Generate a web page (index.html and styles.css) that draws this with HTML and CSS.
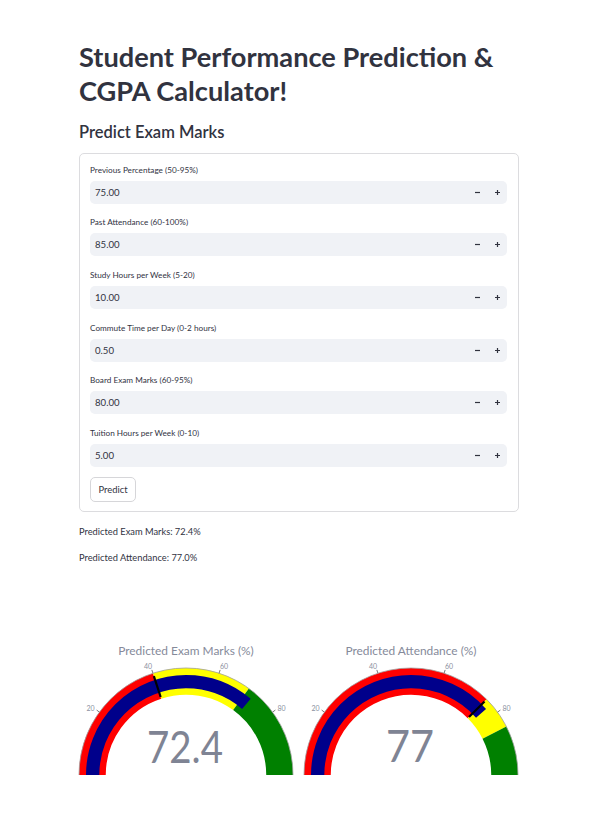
FILE: index.html
```html
<!DOCTYPE html>
<html lang="en">
<head>
<meta charset="utf-8">
<title>Student Performance Prediction &amp; CGPA Calculator</title>
<link rel="stylesheet" href="styles.css">
</head>
<body>
<main class="page">
  <h1 class="title">Student Performance Prediction &amp; CGPA Calculator!</h1>
  <h3 class="subheader">Predict Exam Marks</h3>

  <div class="form">
    <div class="field">
      <label class="field-label">Previous Percentage (50-95%)</label>
      <div class="number-input">
        <span class="value">75.00</span>
        <span class="step"><svg width="7" height="7" viewBox="0 0 7 7"><path d="M1 3.5H6" class="icon"/></svg></span>
        <span class="step"><svg width="7" height="7" viewBox="0 0 7 7"><path d="M1 3.5H6M3.5 1V6" class="icon"/></svg></span>
      </div>
    </div>
    <div class="field">
      <label class="field-label">Past Attendance (60-100%)</label>
      <div class="number-input">
        <span class="value">85.00</span>
        <span class="step"><svg width="7" height="7" viewBox="0 0 7 7"><path d="M1 3.5H6" class="icon"/></svg></span>
        <span class="step"><svg width="7" height="7" viewBox="0 0 7 7"><path d="M1 3.5H6M3.5 1V6" class="icon"/></svg></span>
      </div>
    </div>
    <div class="field">
      <label class="field-label">Study Hours per Week (5-20)</label>
      <div class="number-input">
        <span class="value">10.00</span>
        <span class="step"><svg width="7" height="7" viewBox="0 0 7 7"><path d="M1 3.5H6" class="icon"/></svg></span>
        <span class="step"><svg width="7" height="7" viewBox="0 0 7 7"><path d="M1 3.5H6M3.5 1V6" class="icon"/></svg></span>
      </div>
    </div>
    <div class="field">
      <label class="field-label">Commute Time per Day (0-2 hours)</label>
      <div class="number-input">
        <span class="value">0.50</span>
        <span class="step"><svg width="7" height="7" viewBox="0 0 7 7"><path d="M1 3.5H6" class="icon"/></svg></span>
        <span class="step"><svg width="7" height="7" viewBox="0 0 7 7"><path d="M1 3.5H6M3.5 1V6" class="icon"/></svg></span>
      </div>
    </div>
    <div class="field">
      <label class="field-label">Board Exam Marks (60-95%)</label>
      <div class="number-input">
        <span class="value">80.00</span>
        <span class="step"><svg width="7" height="7" viewBox="0 0 7 7"><path d="M1 3.5H6" class="icon"/></svg></span>
        <span class="step"><svg width="7" height="7" viewBox="0 0 7 7"><path d="M1 3.5H6M3.5 1V6" class="icon"/></svg></span>
      </div>
    </div>
    <div class="field">
      <label class="field-label">Tuition Hours per Week (0-10)</label>
      <div class="number-input">
        <span class="value">5.00</span>
        <span class="step"><svg width="7" height="7" viewBox="0 0 7 7"><path d="M1 3.5H6" class="icon"/></svg></span>
        <span class="step"><svg width="7" height="7" viewBox="0 0 7 7"><path d="M1 3.5H6M3.5 1V6" class="icon"/></svg></span>
      </div>
    </div>
    <button class="btn" type="button">Predict</button>
  </div>

  <div class="results">
    <p class="result">Predicted Exam Marks: 72.4%</p>
    <p class="result">Predicted Attendance: 77.0%</p>
  </div>

  <svg class="chart" width="440" height="190" viewBox="0 0 440 190">
    <!-- Left gauge -->
    <text class="g-title" x="107" y="64" text-anchor="middle">Predicted Exam Marks (%)</text>
    <g transform="rotate(180 107 184)">
      <circle cx="107" cy="184" r="93.625" pathLength="200" class="band red" stroke-dasharray="40 400"/>
      <circle cx="107" cy="184" r="93.625" pathLength="200" class="band yellow" stroke-dasharray="0 40 30 400"/>
      <circle cx="107" cy="184" r="93.625" pathLength="200" class="band green" stroke-dasharray="0 70 30 400"/>
      <circle cx="107" cy="184" r="107" pathLength="200" class="edge" stroke-dasharray="100 400"/>
      <circle cx="107" cy="184" r="93.35" pathLength="200" class="bar" stroke-dasharray="72.4 400"/>
    </g>
    <line x1="81.66" y1="106.01" x2="74.86" y2="85.09" class="threshold"/>
    <g class="ticks">
      <line x1="20.43" y1="121.11" x2="17.60" y2="119.05"/>
      <line x1="73.93" y1="82.24" x2="72.85" y2="78.91"/>
      <line x1="140.07" y1="82.24" x2="141.15" y2="78.91"/>
      <line x1="193.57" y1="121.11" x2="196.40" y2="119.05"/>
    </g>
    <g class="tick-labels" text-anchor="middle">
      <text x="11.5" y="119.5">20</text>
      <text x="69" y="77.8">40</text>
      <text x="145" y="77.8">60</text>
      <text x="202.5" y="119.5">80</text>
    </g>
    <text class="g-number" x="106" y="171.5" text-anchor="middle" textLength="76" lengthAdjust="spacingAndGlyphs">72.4</text>

    <!-- Right gauge -->
    <text class="g-title" x="332" y="64" text-anchor="middle">Predicted Attendance (%)</text>
    <g transform="rotate(180 332 184)">
      <circle cx="332" cy="184" r="93.625" pathLength="200" class="band red" stroke-dasharray="75 400"/>
      <circle cx="332" cy="184" r="93.625" pathLength="200" class="band yellow" stroke-dasharray="0 75 10 400"/>
      <circle cx="332" cy="184" r="93.625" pathLength="200" class="band green" stroke-dasharray="0 85 15 400"/>
      <circle cx="332" cy="184" r="107" pathLength="200" class="edge" stroke-dasharray="100 400"/>
      <circle cx="332" cy="184" r="93.35" pathLength="200" class="bar" stroke-dasharray="77 400"/>
    </g>
    <line x1="389.98" y1="126.02" x2="405.54" y2="110.46" class="threshold"/>
    <g class="ticks">
      <line x1="245.43" y1="121.11" x2="242.60" y2="119.05"/>
      <line x1="298.93" y1="82.24" x2="297.85" y2="78.91"/>
      <line x1="365.07" y1="82.24" x2="366.15" y2="78.91"/>
      <line x1="418.57" y1="121.11" x2="421.40" y2="119.05"/>
    </g>
    <g class="tick-labels" text-anchor="middle">
      <text x="236.5" y="119.5">20</text>
      <text x="294" y="77.8">40</text>
      <text x="370" y="77.8">60</text>
      <text x="427.5" y="119.5">80</text>
    </g>
    <text class="g-number" x="331" y="171" text-anchor="middle" textLength="48" lengthAdjust="spacingAndGlyphs">77</text>
  </svg>
</main>
</body>
</html>
```

FILE: styles.css
```css
* { box-sizing: border-box; }

html, body {
  margin: 0;
  padding: 0;
  background: #ffffff;
}

body {
  font-family: Lato, "Open Sans", sans-serif;
  color: #31333f;
}

.page {
  width: 519px;
  padding: 39.5px 0 0 79px;
}

.title {
  margin: 0;
  font-size: 27.2px;
  line-height: 34px;
  font-weight: 700;
  color: #31333f;
}

.subheader {
  margin: 14.4px 0 0;
  font-size: 16.5px;
  line-height: 20px;
  font-weight: 600;
  color: #31333f;
}

.form {
  margin-top: 11px;
  border: 1px solid #dcdcdf;
  border-radius: 5px;
  padding: 9px 11px 9px 10px;
  display: flex;
  flex-direction: column;
  align-items: stretch;
}

.field + .field {
  margin-top: 11.6px;
}

.field-label {
  display: block;
  height: 15px;
  line-height: 15px;
  font-size: 8.2px;
  color: #31333f;
  margin-bottom: 3px;
}

.number-input {
  display: flex;
  align-items: center;
  height: 23px;
  background: #f0f2f6;
  border-radius: 5px;
  padding-left: 5px;
}

.value {
  flex: 1;
  font-size: 9.6px;
  color: #31333f;
}

.step {
  width: 20px;
  height: 23px;
  display: flex;
  align-items: center;
  justify-content: center;
}

.icon {
  stroke: #31333f;
  stroke-width: 1.2;
  fill: none;
}

.btn {
  align-self: flex-start;
  margin-top: 10px;
  height: 25px;
  padding: 0 7.5px;
  border: 1px solid #d6d6d9;
  border-radius: 5px;
  background: #ffffff;
  font-family: Lato, "Open Sans", sans-serif;
  font-size: 9.4px;
  color: #31333f;
}

.results {
  margin-top: 12px;
  display: flex;
  flex-direction: column;
  gap: 10px;
}

.result {
  margin: 0;
  font-size: 9.3px;
  line-height: 16px;
  color: #31333f;
}

.chart {
  display: block;
  margin-top: 25px;
  overflow: visible;
}

.chart text {
  font-family: Lato, "Open Sans", sans-serif;
}

.g-title {
  font-size: 11.9px;
  fill: #858a9a;
}

.g-number {
  font-size: 45px;
  fill: #7f8494;
}

.band {
  fill: none;
  stroke-width: 26.75;
}

.red { stroke: #ff0000; }
.yellow { stroke: #ffff00; }
.green { stroke: #008000; }

.bar {
  fill: none;
  stroke: #00008b;
  stroke-width: 13.3;
}

.edge {
  fill: none;
  stroke: #a0a0a0;
  stroke-width: 0.8;
}

.threshold {
  stroke: #000000;
  stroke-width: 2.2;
}

.ticks line {
  stroke: #555555;
  stroke-width: 0.8;
}

.tick-labels text {
  font-size: 7px;
  fill: #8a90a0;
}
```
